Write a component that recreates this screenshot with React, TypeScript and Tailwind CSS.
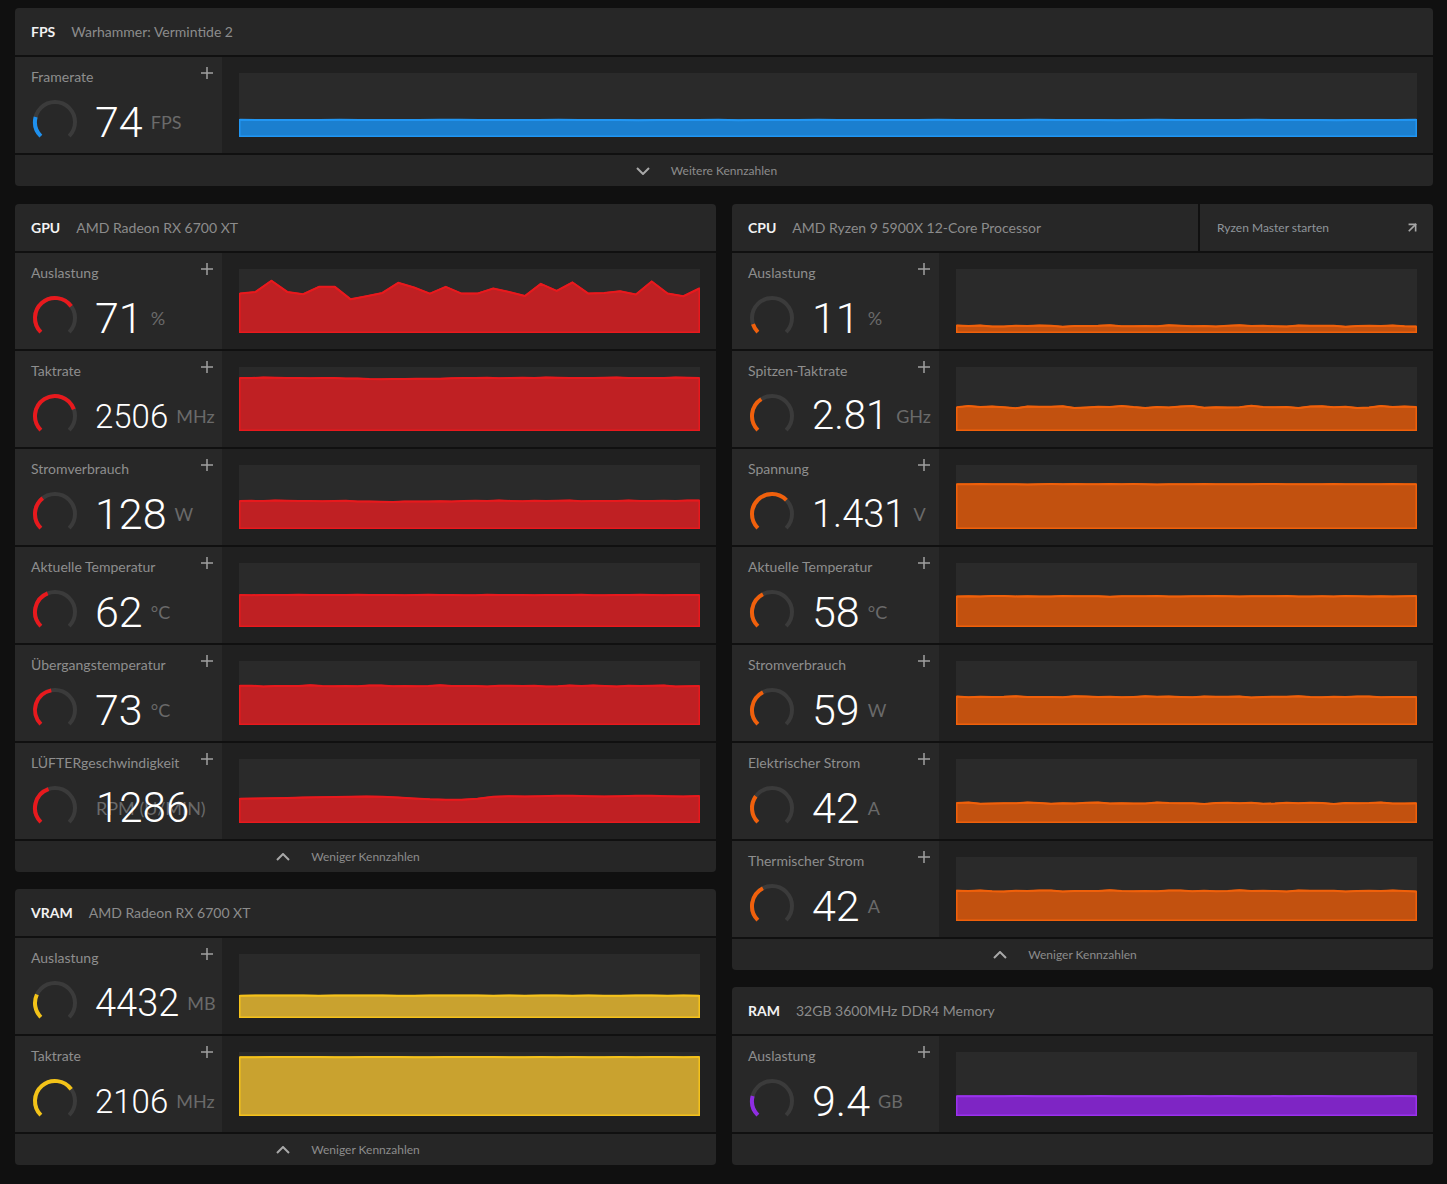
import { ArrowUpRight } from 'lucide-react';

type Metric = {
  label: string;
  value: string;
  unit: string;
  size: string;
  frac: number;
  data: number[];
  overlap?: boolean;
};

type Theme = { arc: string; fill: string; line: string };

const RED: Theme = { arc: '#e8191d', fill: '#bf2023', line: '#e8191d' };
const ORANGE: Theme = { arc: '#f0600c', fill: '#c2510f', line: '#f0600a' };
const BLUE: Theme = { arc: '#1e90ee', fill: '#1b7fcf', line: '#2196f3' };
const YELLOW: Theme = { arc: '#f3c318', fill: '#c9a22f', line: '#f5c21b' };
const PURPLE: Theme = { arc: '#8e2de2', fill: '#7e25c4', line: '#9a32ee' };

const wobble = (base: number, amp: number, n: number, seed: number) =>
  Array.from({ length: n }, (_, i) => base + amp * Math.sin(i * 1.7 + seed) * Math.cos(i * 0.63 + seed * 2.1));

const gpuLoad = [
  0.616, 0.642, 0.816, 0.642, 0.605, 0.721, 0.721, 0.526, 0.574, 0.626, 0.784, 0.711, 0.616, 0.721, 0.616,
  0.616, 0.695, 0.642, 0.579, 0.768, 0.658, 0.789, 0.616, 0.626, 0.653, 0.6, 0.805, 0.616, 0.574, 0.695,
];

const withDip = (base: number, dip: number, n: number, at: number, seed: number) =>
  wobble(base, 0.006, n, seed).map((v, i) => v - dip * Math.exp(-Math.pow((i / (n - 1) - at) * 9, 2)));

const fan = Array.from({ length: 30 }, (_, i) => {
  const t = i / 29;
  if (t < 0.3) return 0.38 + t * 0.12;
  if (t < 0.42) return 0.415 - (t - 0.3) * 0.4;
  if (t < 0.5) return 0.365;
  if (t < 0.56) return 0.365 + (t - 0.5) * 0.9;
  return 0.42 + 0.006 * Math.sin(i * 1.3);
});

const gpu: Metric[] = [
  { label: 'Auslastung', value: '71', unit: '%', size: 'text-[43px]', frac: 0.7, data: gpuLoad },
  { label: 'Taktrate', value: '2506', unit: 'MHz', size: 'text-[33px]', frac: 0.76, data: withDip(0.83, 0.02, 40, 0.34, 1) },
  { label: 'Stromverbrauch', value: '128', unit: 'W', size: 'text-[43px]', frac: 0.36, data: withDip(0.44, 0.015, 40, 0.34, 2) },
  { label: 'Aktuelle Temperatur', value: '62', unit: '°C', size: 'text-[43px]', frac: 0.42, data: wobble(0.5, 0.004, 40, 3) },
  { label: 'Übergangstemperatur', value: '73', unit: '°C', size: 'text-[43px]', frac: 0.46, data: wobble(0.61, 0.01, 40, 4) },
  { label: 'LÜFTERgeschwindigkeit', value: '1286', unit: 'RPM (U/MIN)', size: 'text-[42px]', frac: 0.43, data: fan, overlap: true },
];

const cpu: Metric[] = [
  { label: 'Auslastung', value: '11', unit: '%', size: 'text-[43px]', frac: 0.1, data: wobble(0.11, 0.012, 40, 5) },
  { label: 'Spitzen-Taktrate', value: '2.81', unit: 'GHz', size: 'text-[40px]', frac: 0.38, data: wobble(0.375, 0.02, 40, 6) },
  { label: 'Spannung', value: '1.431', unit: 'V', size: 'text-[38px]', frac: 0.67, data: wobble(0.7, 0.003, 40, 7) },
  { label: 'Aktuelle Temperatur', value: '58', unit: '°C', size: 'text-[43px]', frac: 0.4, data: wobble(0.48, 0.006, 40, 8) },
  { label: 'Stromverbrauch', value: '59', unit: 'W', size: 'text-[43px]', frac: 0.4, data: wobble(0.44, 0.01, 40, 9) },
  { label: 'Elektrischer Strom', value: '42', unit: 'A', size: 'text-[43px]', frac: 0.3, data: wobble(0.31, 0.012, 40, 10) },
  { label: 'Thermischer Strom', value: '42', unit: 'A', size: 'text-[43px]', frac: 0.4, data: wobble(0.47, 0.01, 40, 11) },
];

const vram: Metric[] = [
  { label: 'Auslastung', value: '4432', unit: 'MB', size: 'text-[38px]', frac: 0.26, data: wobble(0.35, 0.002, 30, 12) },
  { label: 'Taktrate', value: '2106', unit: 'MHz', size: 'text-[33px]', frac: 0.7, data: wobble(0.92, 0.002, 30, 13) },
];

const ram: Metric[] = [
  { label: 'Auslastung', value: '9.4', unit: 'GB', size: 'text-[43px]', frac: 0.22, data: wobble(0.31, 0.002, 30, 14) },
];

const polar = (deg: number, r: number) => {
  const a = (deg * Math.PI) / 180;
  return `${23 + r * Math.cos(a)} ${23 + r * Math.sin(a)}`;
};

const arc = (from: number, sweep: number, r: number) =>
  `M ${polar(from, r)} A ${r} ${r} 0 ${sweep > 180 ? 1 : 0} 1 ${polar(from + sweep, r)}`;

const Gauge = ({ frac, color }: { frac: number; color: string }) => (
  <svg width="46" height="46" viewBox="0 0 46 46" className="shrink-0">
    <path d={arc(135, 270, 20)} fill="none" stroke="#3b3b3b" strokeWidth="4" />
    <path d={arc(135, Math.max(frac * 270, 1), 20)} fill="none" stroke={color} strokeWidth="4" />
  </svg>
);

const Chart = ({ data, theme, width }: { data: number[]; theme: Theme; width: number }) => {
  const h = 64;
  const step = (width - 1.5) / (data.length - 1);
  const pts = data.map((v, i) => `${(0.75 + i * step).toFixed(2)},${(h - v * h).toFixed(2)}`).join(' ');
  return (
    <svg width={width} height={h} viewBox={`0 0 ${width} ${h}`} className="block">
      <polygon
        points={`0.75,${h - 0.75} ${pts} ${width - 0.75},${h - 0.75}`}
        fill={theme.fill}
        stroke={theme.line}
        strokeWidth="1.5"
      />
      <polyline points={pts} fill="none" stroke={theme.line} strokeWidth="2" strokeLinejoin="round" />
    </svg>
  );
};

const Plus = () => (
  <svg width="12" height="12" viewBox="0 0 12 12" className="shrink-0">
    <path d="M6 0v12M0 6h12" stroke="#a0a0a0" strokeWidth="1.5" />
  </svg>
);

const Row = ({ m, theme, chartWidth }: { m: Metric; theme: Theme; chartWidth: number }) => (
  <div className="flex h-[96px]">
    <div className="w-[207px] shrink-0 bg-[#282828]">
      <div className="flex justify-between pl-[16px] pr-[9px] pt-[10px]">
        <span className="text-[14px] leading-[20px] text-[#8e8e8e]">{m.label}</span>
        <Plus />
      </div>
      <div className="mt-[12px] flex h-[46px] items-center pl-[17px]">
        <Gauge frac={m.frac} color={theme.arc} />
        {m.overlap ? (
          <div className="ml-[18px] grid items-center">
            <span className="col-start-1 row-start-1 text-[18px] leading-none text-[#6a6a6a]">{m.unit}</span>
            <span
              className={`col-start-1 row-start-1 z-10 font-['Roboto',sans-serif] font-light leading-none text-white ${m.size}`}
            >
              {m.value}
            </span>
          </div>
        ) : (
          <div className="ml-[17px] flex items-center">
            <span className={`font-['Roboto',sans-serif] font-light leading-none text-white ${m.size}`}>{m.value}</span>
            <span className="ml-[8px] text-[18px] leading-none text-[#6a6a6a]">{m.unit}</span>
          </div>
        )}
      </div>
    </div>
    <div className="flex-1 bg-[#202020] pl-[17px] pr-[16px] pt-[16px]">
      <div className="h-[64px] bg-[#2a2a2a]">
        <Chart data={m.data} theme={theme} width={chartWidth} />
      </div>
    </div>
  </div>
);

const Chevron = ({ up }: { up?: boolean }) => (
  <svg width="14" height="8" viewBox="0 0 14 8" className="shrink-0">
    <polyline points={up ? '1,7 7,1 13,7' : '1,1 7,7 13,1'} fill="none" stroke="#a8a8a8" strokeWidth="2" />
  </svg>
);

const Footer = ({ text, up }: { text?: string; up?: boolean }) => (
  <div className="flex h-[31px] items-center justify-center bg-[#262626]">
    {text && (
      <>
        <Chevron up={up} />
        <span className="ml-[21px] text-[12px] text-[#8c8c8c]">{text}</span>
        <span className="ml-[21px] w-[14px]" />
      </>
    )}
  </div>
);

const Header = ({ tag, name, extra }: { tag: string; name: string; extra?: boolean }) => (
  <div className="flex h-[47px] gap-[2px]">
    <div className="flex flex-1 items-center gap-[16px] bg-[#272727] pl-[16px]">
      <span className="text-[14px] font-bold text-[#f2f2f2]">{tag}</span>
      <span className="text-[14px] text-[#8c8c8c]">{name}</span>
    </div>
    {extra && (
      <div className="flex w-[233px] items-center justify-between bg-[#272727] pl-[17px] pr-[13px]">
        <span className="text-[12px] text-[#8f959b]">Ryzen Master starten</span>
        <ArrowUpRight size={15} strokeWidth={2.6} color="#a6a6a6" strokeLinecap="square" />
      </div>
    )}
  </div>
);

const Panel = ({
  tag,
  name,
  rows,
  theme,
  chartWidth,
  footer,
  up,
  extra,
}: {
  tag: string;
  name: string;
  rows: Metric[];
  theme: Theme;
  chartWidth: number;
  footer?: string;
  up?: boolean;
  extra?: boolean;
}) => (
  <div className="flex flex-col gap-[2px] overflow-hidden rounded-[4px]">
    <Header tag={tag} name={name} extra={extra} />
    {rows.map((m) => (
      <Row key={m.label} m={m} theme={theme} chartWidth={chartWidth} />
    ))}
    <Footer text={footer} up={up} />
  </div>
);

export default function App() {
  return (
    <div className="min-h-screen bg-[#101010] pl-[15px] pr-[14px] pt-[8px] font-['Lato',sans-serif]">
      <Panel
        tag="FPS"
        name="Warhammer: Vermintide 2"
        rows={[{ label: 'Framerate', value: '74', unit: 'FPS', size: 'text-[43px]', frac: 0.22, data: wobble(0.266, 0.003, 60, 15) }]}
        theme={BLUE}
        chartWidth={1178}
        footer="Weitere Kennzahlen"
      />
      <div className="mt-[18px] grid grid-cols-2 gap-x-[16px]">
        <div className="flex flex-col gap-[17px]">
          <Panel tag="GPU" name="AMD Radeon RX 6700 XT" rows={gpu} theme={RED} chartWidth={461} footer="Weniger Kennzahlen" up />
          <Panel tag="VRAM" name="AMD Radeon RX 6700 XT" rows={vram} theme={YELLOW} chartWidth={461} footer="Weniger Kennzahlen" up />
        </div>
        <div className="flex flex-col gap-[17px]">
          <Panel
            tag="CPU"
            name="AMD Ryzen 9 5900X 12-Core Processor"
            rows={cpu}
            theme={ORANGE}
            chartWidth={461}
            footer="Weniger Kennzahlen"
            up
            extra
          />
          <Panel tag="RAM" name="32GB 3600MHz DDR4 Memory" rows={ram} theme={PURPLE} chartWidth={461} />
        </div>
      </div>
    </div>
  );
}
